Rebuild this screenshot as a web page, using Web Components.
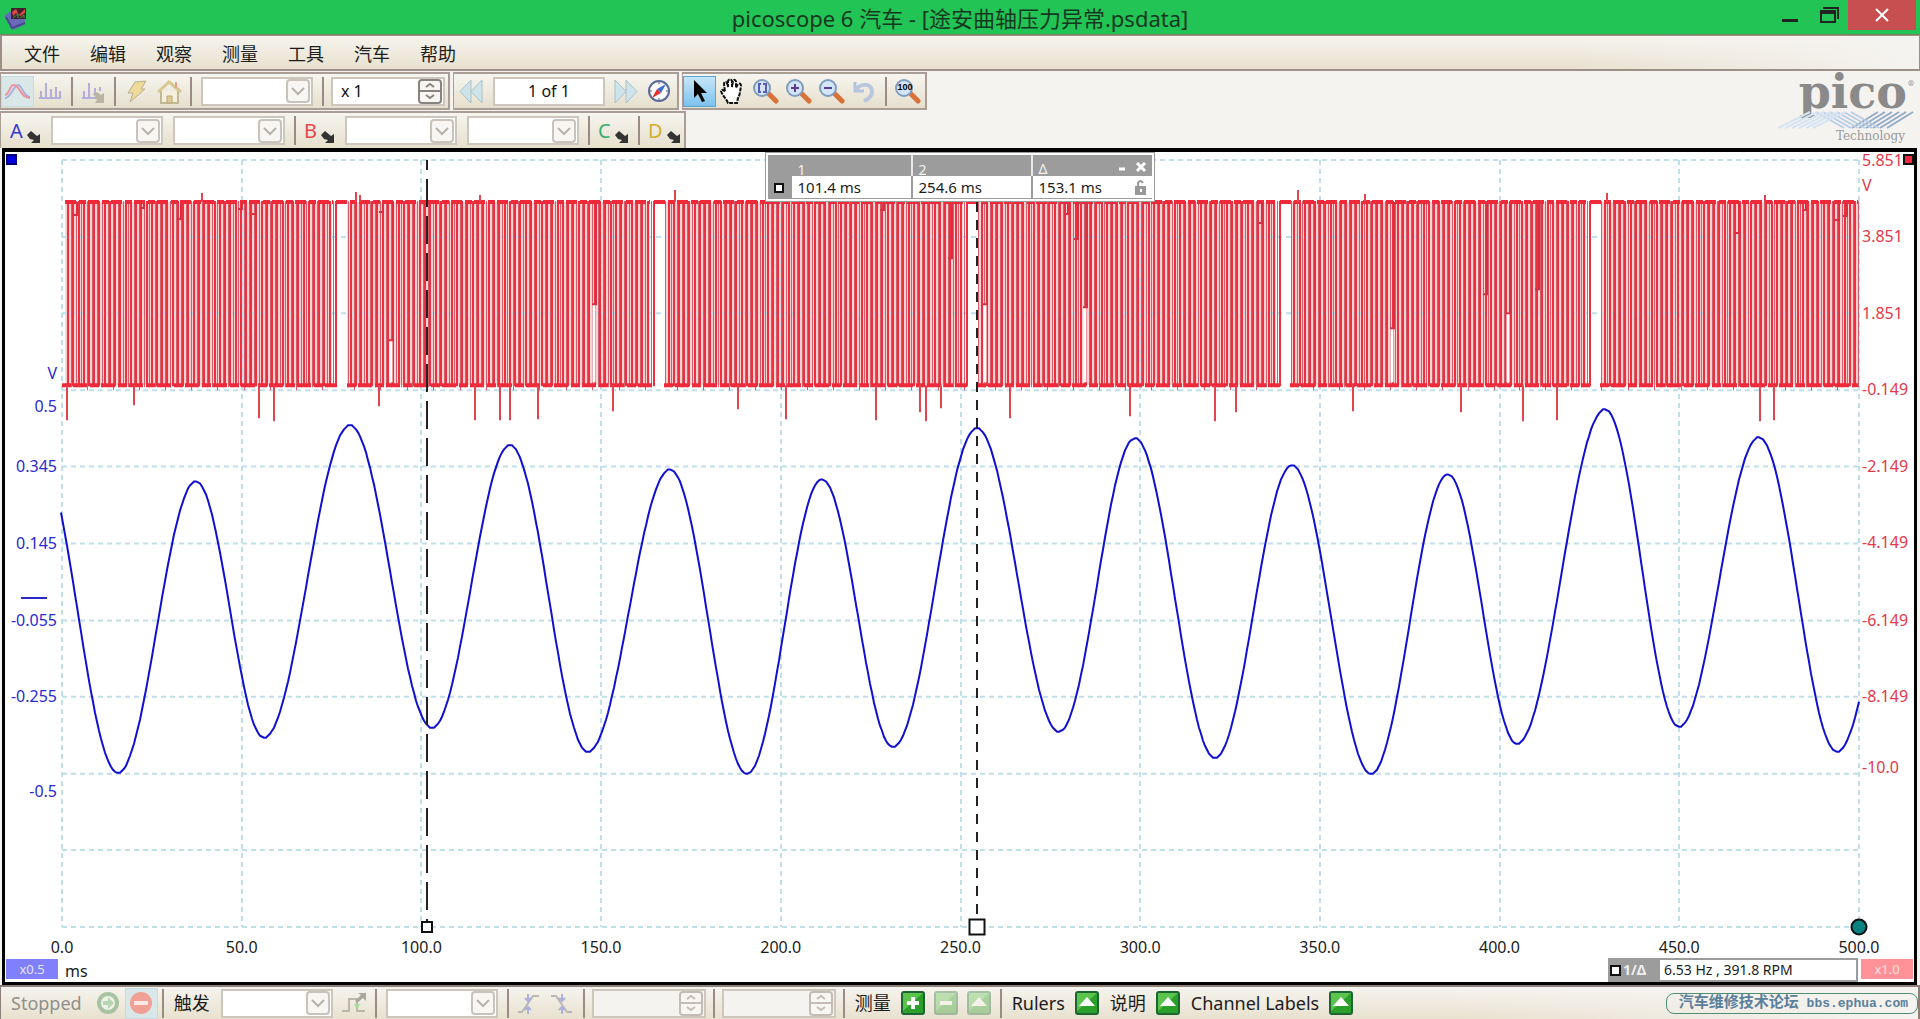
<!DOCTYPE html>
<html lang="zh-CN">
<head>
<meta charset="utf-8">
<title>picoscope 6 汽车</title>
<style>
    html, body {
        height: 100%;
        margin: 0;
    }

    body {
        font-family: "Noto Sans", "Noto Sans CJK SC", sans-serif;
        color: #1c1c1c;
        background: #f5f3f0;
    }
</style>
</head>
<body>
<scope-app></scope-app>

<script>
const ICONS = {
    app: `<path d="M2 13l7-5 15 3-2 11-11 5z" fill="#6a68b8"/><path d="M4 14l6 11 13-5" fill="none" stroke="#4a4a90" stroke-width="2"/><path d="M9 5h15v11H9z" fill="#40202a"/><path d="M10 9l4-3 3 6 6-6v4l-5 3-4-3-3 3z" fill="#e04848"/><path d="M11 15l5-4v4M18 15l4-3v3" stroke="#3a9a50" fill="none"/>`,
    wave: `<path d="M1 20c5 1 9-13 13-13s5 11 12 12" fill="none" stroke="#a8b0dc" stroke-width="2"/><path d="M1 17c5-1 4-10 9-10s7 13 16 13" fill="none" stroke="#f0949c" stroke-width="2"/>`,
    bars: `<path d="M2 20h22M4 20v-7M9 20V5M14 20v-9M19 20V9M23 20v-7" fill="none" stroke="#b5addb" stroke-width="2"/>`,
    barsArrow: `<path d="M2 20h15M4 20v-7M9 20V5M15 10v6M20 9v4" fill="none" stroke="#b5addb" stroke-width="2"/><path d="M13 16l4-2 4 3 3-2v10h-9l2-3z" fill="#b8b5a4"/>`,
    flash: `<path d="M12 4l11-1-5 8h4L7 24l3-9H5z" fill="#eedb9a" stroke="#b8ae90"/>`,
    home: `<path d="M5 13v12h17V13" fill="#f4efdc" stroke="#c2b994" stroke-width="2"/><path d="M2 14L13 4l12 10" fill="none" stroke="#d8c890" stroke-width="3"/><path d="M20 4v6" stroke="#e0a090" stroke-width="2"/><path d="M11 25v-7h5v7z" fill="#e3c88a" stroke="#b8a880"/>`,
    rewind: `<path d="M13 2v23L2 13.500zM24 2v23L13 13.500z" fill="#cfe3ea" stroke="#a9c3cd"/>`,
    forward: `<path d="M2 2v23l11-11.500zM13 2v23l11-11.500z" fill="#cfe3ea" stroke="#a9c3cd"/>`,
    compass: `<circle cx="13" cy="13" r="10" fill="#fcfcfc" stroke="#5a6a98" stroke-width="2"/><path d="M13 4v2M13 20v2M4 13h2M20 13h2" stroke="#557"/><path d="M20 6l-5 9-4-4z" fill="#3b6fd0"/><path d="M6 20l5-9 4 4z" fill="#e03030"/>`,
    pointer: `<path d="M8 2v18l4-4 4 8 3-1-4-8h6z" fill="#000"/>`,
    hand: `<path d="M9 25c-2-5-6-8-7-12 1-2 3-1 4 1L5 6c0-2 2-3 3-1l1 4V3c1-2 3-2 4 0v6l1-6c1-2 3-1 3 1v6l2-4c2-1 3 0 3 2-1 5-1 9-3 12l-1 5z" fill="#fff" stroke="#111" stroke-width="2" stroke-dasharray="4 1"/>`,
    undo: `<path d="M4 4v9h9" fill="none" stroke="#b4c3dd" stroke-width="3"/><path d="M5 12c3-6 15-8 16 1 0 5-3 8-8 10" fill="none" stroke="#b9c6de" stroke-width="4"/>`,
    edge: `<path d="M1 21h7V9h8v12h8" fill="none" stroke="#b8b8a8" stroke-width="2"/><path d="M13 14h6l-3 6z" fill="#a8d8a0"/><path d="M14 11l6-6-3-2h8v8l-3-3-6 5z" fill="#a9a99b"/>`,
    rising: `<path d="M2 22h4L17 6h6" fill="none" stroke="#b9b8b4" stroke-width="2"/><path d="M12 4v6m-3-2l3 3 3-3M12 24v-6m-3 2l3-3 3 3" fill="none" stroke="#aeb0dc" stroke-width="2"/>`,
    falling: `<path d="M2 6h5l11 16h5" fill="none" stroke="#b9b8b4" stroke-width="2"/><path d="M13 4v6m-3-2l3 3 3-3M13 24v-6m-3 2l3-3 3 3" fill="none" stroke="#aeb0dc" stroke-width="2"/>`,
    go: `<circle cx="13" cy="13" r="11" fill="#a9c2a2"/><circle cx="13" cy="13" r="7" fill="#edf3e6"/><path d="M8 11h5V7l6 6-6 6v-4H8z" fill="#b9d4b2"/>`,
    stop: `<circle cx="13" cy="13" r="11" fill="#f0a094"/><path d="M6 11h14v4H6z" fill="#fbe9e4"/>`
};

function lens(mark) {
    return `<path d="M16 15l8 8" stroke="#d9713a" stroke-width="5" stroke-linecap="round"/>
        <circle cx="10" cy="10" r="8" fill="#d3e4f7" stroke="#7f9dbc" stroke-width="2"/>${mark}`;
}
ICONS.zoomBox = lens('<path d="M9 6H7v8h2M11 6h3v8h-3" fill="none" stroke="#5a5ab8" stroke-width="2"/>');
ICONS.zoomIn = lens('<path d="M10 6v8M6 10h8" stroke="#5a3a9a" stroke-width="2"/>');
ICONS.zoomOut = lens('<path d="M6 10h8" stroke="#5a3a9a" stroke-width="2"/>');
ICONS.zoomFull = lens('<text x="11" y="12" font-size="9" font-weight="700" text-anchor="middle" fill="#000">100</text>');

function greenTile(mark) {
    return `<rect x="2" y="2" width="22" height="22" rx="2" fill="#2aa02a" stroke="#1c6434" stroke-width="2"/>
        <path d="M3 3h20L3 21z" fill="#6fd35c" opacity=".7"/>${mark}`;
}
ICONS.plus = greenTile('<path d="M13 7v12M7 13h12" stroke="#fff" stroke-width="4"/>');
ICONS.minus = greenTile('<path d="M7 13h12" stroke="#fff" stroke-width="4"/>');
ICONS.up = greenTile('<path d="M5 16l8-9 8 9z" fill="#fff"/>');

class ScopeElement extends HTMLElement {

    constructor() {
        super();
        this.shadowDOM = this.attachShadow({mode: "open"});
    }

    connectedCallback() {
        this.render();
    }
}

class TitleBar extends ScopeElement {
    render() {
        this.shadowDOM.innerHTML = `
        <style>
            :host {
                display: grid;
                grid-template-columns: 1fr auto 1fr;
                height: 35px;
                box-sizing: border-box;
                background: #22c455;
                border-bottom: 1px solid #6d8a5c;
            }
            h1 {
                margin: 0;
                font-size: 22px;
                font-weight: 400;
                line-height: 36px;
                color: #17381f;
            }
            .app { padding: 3px 2px; }
            .controls {
                display: flex;
                justify-content: flex-end;
                align-items: flex-start;
                padding-right: 4px;
            }
            button {
                width: 39px;
                height: 30px;
                padding: 0;
                border: 0;
                background: none;
            }
            .close { width: 68px; background: #c84f50; }
            svg { display: block; }
            button svg { margin: 0 auto; }
        </style>
        <div class="app"><svg width="27" height="28">${ICONS.app}</svg></div>
        <h1><slot></slot></h1>
        <div class="controls">
            <button aria-label="最小化"><svg width="18" height="30"><path d="M1 20.500h16" stroke="#222" stroke-width="3"/></svg></button>
            <button aria-label="还原"><svg width="20" height="30"><path d="M2 11h14v11H2zM1 13h16" fill="none" stroke="#222" stroke-width="2"/><path d="M4 8h15v11" fill="none" stroke="#222" stroke-width="2"/></svg></button>
            <button class="close" aria-label="关闭"><svg width="14" height="30"><path d="M1 9l12 12M13 9L1 21" stroke="#fff" stroke-width="2"/></svg></button>
        </div>`;
    }
}

class MenuBar extends ScopeElement {
    render() {
        const items = this.getAttribute("items").split(",");
        this.shadowDOM.innerHTML = `
        <style>
            :host {
                display: flex;
                height: 36px;
                box-sizing: border-box;
                padding-left: 7px;
                border: 1px solid #9b8f86;
                border-width: 1px 1px 2px 2px;
                background: linear-gradient(90deg, transparent 82%, #f5f3f0), linear-gradient(#f6f4ee, #e8e1cf);
            }
            button {
                width: 66px;
                padding: 0;
                border: 0;
                background: none;
                color: inherit;
                font: 18px "Noto Sans CJK SC", sans-serif;
            }
        </style>
        ${items.map(item => `<button>${item}</button>`).join("")}`;
    }
}

class ToolGroup extends ScopeElement {
    render() {
        this.shadowDOM.innerHTML = `
        <style>
            :host {
                display: flex;
                align-items: center;
                height: 38px;
                box-sizing: border-box;
                border: 2px solid #aa9d95;
                border-left-width: 1px;
                background: linear-gradient(#f7f5ef, #e6dfcd);
            }
            :host([open]) { height: 37px; border-bottom: 0; }
        </style>
        <slot></slot>`;
    }
}

class ToolButton extends ScopeElement {
    render() {
        const name = this.getAttribute("icon");
        this.shadowDOM.innerHTML = `
        <style>
            :host { display: block; }
            button {
                display: grid;
                place-items: center;
                width: 33px;
                height: 31px;
                padding: 0;
                border: 1px solid transparent;
                background: none;
            }
            :host([state=on]) button {
                border-color: #5aa5d8;
                background: linear-gradient(#c8e6f8, #7cc2ee);
            }
            :host([state=soft]) button {
                border-color: #c5dce0;
                background: #d9e7e8;
            }
            :host([state=faded]) svg { opacity: .35; }
            svg { display: block; }
        </style>
        <button aria-label="${this.getAttribute("label")}"><svg width="27" height="27">${ICONS[name]}</svg></button>`;
    }
}

class ToolDivider extends ScopeElement {
    render() {
        this.shadowDOM.innerHTML = `
        <style>
            :host {
                display: block;
                width: 2px;
                height: 29px;
                margin: 0 4px;
                background: #9a8c84;
            }
        </style>`;
    }
}

class ChannelButton extends ScopeElement {
    render() {
        this.shadowDOM.innerHTML = `
        <style>
            :host { display: block; }
            button {
                display: flex;
                align-items: center;
                gap: 4px;
                width: 40px;
                height: 33px;
                padding: 0 0 0 4px;
                border: 0;
                background: none;
                font: 20px "Noto Sans", sans-serif;
                color: var(--channel);
            }
            svg { margin-top: 12px; }
        </style>
        <button><slot></slot><svg width="13" height="13"><path d="M0 5l4-4 6 5 3-2v9H4l3-3-4-1z" fill="#333"/></svg></button>`;
    }
}

class ComboBox extends ScopeElement {
    render() {
        this.shadowDOM.innerHTML = `
        <style>
            :host {
                display: grid;
                width: 112px;
                height: 29px;
                margin: 0 5px;
            }
            select {
                grid-area: 1 / 1;
                width: 100%;
                appearance: none;
                border: 2px solid #cdc6bc;
                border-radius: 0;
                background: #fff;
                opacity: 1;
            }
            svg {
                grid-area: 1 / 1;
                place-self: center end;
                margin-right: 3px;
                pointer-events: none;
            }
        </style>
        <select disabled aria-label="${this.getAttribute("label")}"></select>
        <svg width="24" height="24"><rect x="1" y="1" width="22" height="22" rx="3" fill="#f8f6f3" stroke="#c9c2bb" stroke-width="2"/><path d="M6 9l6 6 6-6" fill="none" stroke="#b8b2ac" stroke-width="2"/></svg>`;
    }
}

class SpinBox extends ScopeElement {
    render() {
        this.shadowDOM.innerHTML = `
        <style>
            :host {
                --ink: #c4bcb4;
                --paper: #f5f3f0;
                display: grid;
                width: 114px;
                height: 29px;
                margin: 0 3px;
            }
            :host([value]) { --ink: #8a827c; --paper: #fff; }
            input {
                grid-area: 1 / 1;
                width: 100%;
                box-sizing: border-box;
                padding: 0 8px;
                border: 2px solid #cdc6bc;
                background: var(--paper);
                font: 16px "Noto Sans", sans-serif;
                color: #111;
            }
            svg {
                grid-area: 1 / 1;
                place-self: center end;
                margin-right: 3px;
                pointer-events: none;
            }
        </style>
        <input type="text" value="${this.getAttribute("value") || ""}" aria-label="${this.getAttribute("label")}">
        <svg width="24" height="25"><g fill="#f8f6f3" stroke="var(--ink)" stroke-width="2"><rect x="1" y="1" width="22" height="23" rx="3"/><path d="M1 12h22"/><path d="M8 8l4-3 4 3M8 16l4 3 4-3" fill="none"/></g></svg>`;
    }
}

class PicoLogo extends ScopeElement {
    render() {
        let swoosh = "";
        for (let i = 0; i < 6; i++) {
            const x = i * 7;
            swoosh += `<path d="M${2 + x} 17L${34 + x} 1" stroke="#d6e4f2"/>
                <path d="M${40 + x} 1L${68 + x} 17" stroke="#b9cde4"/>
                <path d="M${76 + x} 17L${102 + x} 1" stroke="#93abc6"/>`;
        }
        this.shadowDOM.innerHTML = `
        <style>
            :host {
                display: grid;
                justify-items: end;
                align-content: start;
                padding-right: 5px;
                font-family: "DejaVu Serif", serif;
                color: #8a8a8a;
            }
            .word { display: flex; font-size: 46px; font-weight: 700; line-height: 42px; }
            .word sup { font-size: 8px; line-height: 24px; color: #aaa; }
            svg { margin-top: -2px; }
            .sub { font-size: 12px; line-height: 14px; padding-right: 10px; color: #999; }
        </style>
        <div class="word"><span>pico</span><sup>®</sup></div>
        <svg width="139" height="18" fill="none" stroke-width="2">${swoosh}</svg>
        <div class="sub">Technology</div>`;
    }
}

class RulerLegend extends ScopeElement {
    render() {
        this.shadowDOM.innerHTML = `
        <style>
            :host {
                display: block;
                box-sizing: border-box;
                width: 390px;
                padding: 2px;
                border: 1px solid #9c9c9c;
                background: #fff;
            }
            table {
                width: 100%;
                border-collapse: collapse;
                table-layout: fixed;
                border-bottom: 1px solid #9c9c9c;
                font-size: 15px;
            }
            th, td { padding: 0 6px; text-align: left; white-space: nowrap; }
            thead { background: #9c9c9c; color: #f2f2f2; }
            thead th {
                height: 21px;
                font-size: 14px;
                line-height: 12px;
                font-weight: 400;
                vertical-align: bottom;
                border-right: 2px solid #e8e8e8;
            }
            thead th:first-child, thead th:last-child { border-right: 0; }
            tbody th { background: #9c9c9c; }
            tbody td { height: 22px; line-height: 22px; border-right: 2px solid #9c9c9c; }
            tbody td:last-child { border-right: 0; }
            .end { display: flex; align-items: center; justify-content: space-between; }
            .tools { display: flex; gap: 10px; }
            button { padding: 0; border: 0; background: none; display: block; line-height: 0; }
        </style>
        <table>
            <colgroup><col style="width:24px"><col style="width:120px"><col style="width:120px"><col></colgroup>
            <thead>
                <tr><th></th><th>1</th><th>2</th><th><div class="end">Δ<span class="tools">
                    <button aria-label="最小化"><svg width="8" height="14"><path d="M1 7h6" stroke="#fff" stroke-width="3"/></svg></button>
                    <button aria-label="关闭"><svg width="10" height="14"><path d="M1 1l8 8M9 1l-8 8" stroke="#fff" stroke-width="3"/></svg></button>
                </span></div></th></tr>
            </thead>
            <tbody>
                <tr><th><svg width="10" height="10"><path d="M1 1h8v8H1z" fill="#fff" stroke="#111" stroke-width="2"/></svg></th>
                <td>101.4 ms</td><td>254.6 ms</td>
                <td><div class="end">153.1 ms<svg width="11" height="16"><path d="M3 8V4q2-4 5 0" fill="none" stroke="#999" stroke-width="2"/><path d="M0 7h11v9H0z" fill="#999"/><path d="M5 10h2v3H5z" fill="#fff"/></svg></div></td></tr>
            </tbody>
        </table>`;
    }
}

// Vertical scale: "gap:label" pairs, the gap being the distance from the previous tick
class ScaleAxis extends ScopeElement {
    render() {
        const ticks = this.getAttribute("ticks").split(" ").map(t => t.split(":"));
        this.shadowDOM.innerHTML = `
        <style>
            :host { display: flex; flex-direction: column; font-size: 16px; }
            div {
                display: flex;
                align-items: flex-end;
                justify-content: var(--side);
                min-height: 0;
                height: 0;
            }
            span { line-height: 0; }
            i { width: 26px; height: 2px; margin-right: 10px; background: #2a2ac8; }
        </style>
        ${ticks.map(([gap, label]) => `<div style="flex:${gap} 1 0">${label === "_" ? "<i></i>" : label ? `<span>${label}</span>` : ""}</div>`).join("")}`;
    }
}

const PLOT = {width: 1797, height: 766, left: 62, top: 160};

// Turning points of channel A
const PRESSURE = [
    [37, 447], [118, 772], [196, 481], [264, 737], [350, 425], [432, 727], [510, 445],
    [588, 751], [670, 469], [747, 773], [822, 479], [893, 746], [977, 428], [1059, 731],
    [1135, 438], [1215, 757], [1292, 465], [1371, 773], [1448, 474], [1517, 743],
    [1605, 409], [1679, 726], [1759, 437], [1837, 751], [1915, 480]
];

// First rising edge after each missing tooth of the crank wheel
const GAPS = [22, 336, 654, 967, 1280, 1590, 1903];

const DROPS = [
    [67, 420], [134, 405], [259, 418], [274, 421], [379, 406], [475, 420], [500, 420], [510, 420],
    [538, 419], [613, 411], [738, 409], [786, 419], [876, 420], [920, 412], [926, 421], [941, 408],
    [1010, 418], [1130, 416], [1215, 421], [1236, 412], [1353, 411], [1461, 412], [1523, 421],
    [1557, 420], [1760, 421], [1774, 420]
];
const PEAKS = [[202, 193], [356, 192], [360, 195], [480, 195], [675, 190], [823, 194], [1298, 190], [1365, 194], [1607, 193], [1765, 195]];
const NOTCHES = [
    [75, 215], [142, 208], [179, 219], [240, 209], [254, 214], [381, 212], [391, 340], [594, 304],
    [882, 210], [950, 258], [985, 304], [1066, 214], [1076, 239], [1085, 307], [1260, 223],
    [1392, 328], [1485, 294], [1508, 313], [1537, 289], [1737, 233], [1804, 210], [1837, 220], [1845, 216]
];

function pressurePath() {
    const points = [];
    for (let i = 0; i < PRESSURE.length - 1; i++) {
        const [x0, y0] = PRESSURE[i];
        const [x1, y1] = PRESSURE[i + 1];
        for (let x = x0; x < x1; x += 2) {
            if (x < 61 || x > 1859) continue;
            const t = (x - x0) / (x1 - x0);
            points.push(x + " " + Math.round(y0 + (y1 - y0) * (1 - Math.cos(Math.PI * t)) / 2));
        }
    }
    return "M" + points.join("L");
}

function crankEdges() {
    let rises = "";
    let falls = "";
    for (let g = 0; g < GAPS.length - 1; g++) {
        const start = GAPS[g];
        const step = (GAPS[g + 1] - start) / 60;
        for (let n = 0; n < 58; n++) {
            // the first tooth stays high over the missing ones
            const rise = n === 0 ? start : start + (n + 1.8) * step;
            const fall = n === 0 ? start + 2 * step + 1 : rise + step * .55;
            if (rise < 64 || fall > 1858) continue;
            const wobble = (n * 7 + g * 3) % 5 === 0 ? 4 : 1;
            rises += `M${Math.round(rise)} 386V201`;
            falls += `M${Math.round(fall) + .5} 201V${386 + wobble}`;
        }
    }
    return {rises, falls};
}

class ScopePlot extends ScopeElement {
    render() {
        const {width, height, left, top} = PLOT;
        const {rises, falls} = crankEdges();
        let grid = "";
        for (let i = 0; i <= 10; i++) {
            const x = Math.round(left + width * i / 10);
            const y = Math.round(top + height * i / 10);
            grid += `M${x} ${top}v${height}M${left} ${y}h${width}`;
        }
        this.shadowDOM.innerHTML = `
        <style>
            :host { display: block; position: relative; }
            svg { display: block; width: 100%; height: 100%; overflow: visible; position: absolute; }
            path { vector-effect: non-scaling-stroke; fill: none; }
            .handle {
                position: absolute;
                top: 100%;
                box-sizing: border-box;
                width: var(--size);
                height: var(--size);
                border: 2px solid #111;
                background: #fff;
                transform: translate(-50%, -50%);
            }
            .trigger { border-radius: 50%; background: #0a8080; }
        </style>
        <svg viewBox="${left} ${top} ${width} ${height}" preserveAspectRatio="none">
            <path d="${GAPS.map((g, i) => {
                const from = Math.max(g + 11, 65);
                const to = Math.min((GAPS[i + 1] || 0) - 4, 1858);
                return to > from ? `M${from} 202H${to}V385H${from}z` : "";
            }).join("")}" style="fill:#fad2d2"/>
            <path d="${grid}" stroke="#bfe0ea" stroke-width="2" stroke-dasharray="5 4"/>
            <path d="${falls}" stroke="#cf5f6c" stroke-width="1"/>
            <path d="${rises}" stroke="#ec3040" stroke-width="2"/>
            <path d="M65 202H333M336 202H650M654 202H963M967 202H1275M1280 202H1586M1590 202H1858" stroke="#ee2a3a" stroke-width="4" stroke-dasharray="11 3 7 2"/>
            <path d="M62 385H337M347 385H654M664 385H967M977 385H1280M1290 385H1590M1600 385H1858" stroke="#ee2a3a" stroke-width="4" stroke-dasharray="9 2 14 3"/>
            <path d="${NOTCHES.filter(n => n[1] > 300).map(([x, y]) => `M${x} ${y}V382`).join("")}" stroke="#fff" stroke-width="3"/>
            <path d="${NOTCHES.map(([x, y]) => `M${x - 2} ${y}h4V202`).join("")}" stroke="#d83040" stroke-width="2"/>
            <path d="${DROPS.map(([x, y]) => `M${x} 385V${y}`).join("") + PEAKS.map(([x, y]) => `M${x} 202V${y}`).join("")}" stroke="#e04550" stroke-width="2"/>
            <path d="${pressurePath()}" stroke="#1010d0" stroke-width="2"/>
            <path d="M427 160V926" stroke="#222" stroke-width="2" stroke-dasharray="28 9" stroke-dashoffset="18"/>
            <path d="M977 202V926" stroke="#222" stroke-width="2" stroke-dasharray="10 8"/>
        </svg>
        <div class="handle" style="--size:12px; left:${(427 - left) / width * 100}%"></div>
        <div class="handle" style="--size:17px; left:${(977 - left) / width * 100}%"></div>
        <div class="handle trigger" style="--size:17px; left:100%"></div>`;
    }
}

class TimeAxis extends ScopeElement {
    render() {
        let labels = "";
        for (let t = 0; t <= 500; t += 50) labels += `<span>${t}.0</span>`;
        this.shadowDOM.innerHTML = `
        <style>
            :host {
                display: flex;
                justify-content: space-between;
                font-size: 16px;
                line-height: 40px;
            }
            span { display: flex; justify-content: center; width: 0; height: 31px; }
        </style>
        ${labels}`;
    }
}

class ScopeView extends ScopeElement {
    render() {
        this.shadowDOM.innerHTML = `
        <style>
            :host {
                display: grid;
                position: relative;
                grid-template-columns: 57px 1fr 55px;
                grid-template-rows: 1fr 31px 24px;
                padding-top: 8px;
                margin: 0 3px 0 2px;
                border: 3px solid #000;
                border-top-width: 4px;
                background: #fff;
            }
            scale-axis.a { --side: flex-end; color: #2a2ad0; padding-right: 5px; }
            scale-axis.b { --side: flex-start; color: #e5384a; padding-left: 3px; }
            time-axis { grid-column: 2; }
            .foot {
                grid-column: 1 / -1;
                display: flex;
                align-items: flex-start;
                gap: 3px;
                padding: 0 1px;
            }
            .scale {
                width: 52px;
                margin-top: 1px;
                font-size: 13px;
                line-height: 20px;
                text-align: center;
                color: #e6e6ff;
                background: #8080ff;
            }
            .scale.b { background: #ff9298; color: #ffe0e2; }
            .unit { flex: 1; padding-left: 4px; font-size: 16px; line-height: 26px; }
            .freq {
                display: flex;
                box-sizing: border-box;
                width: 250px;
                height: 24px;
                border: 2px solid #9c9c9c;
                font-size: 14px;
                line-height: 20px;
            }
            .freq b {
                display: flex;
                align-items: center;
                gap: 2px;
                width: 50px;
                background: #9c9c9c;
                color: #eee;
                margin-right: 4px;
            }
            .corner {
                position: absolute;
                top: 2px;
                box-sizing: border-box;
                width: 11px;
                height: 11px;
                border: 2px solid #111;
            }
            .corner.a { left: 1px; background: #0000e0; border-color: #000070; }
            .corner.b { right: 0; background: #f02840; }
            ruler-legend { position: absolute; top: 0; left: 50%; transform: translateX(-50%); }
        </style>
        <scale-axis class="a" ticks="213:V 33:0.5 60:0.345 76:0.145 56:_ 21:-0.055 76:-0.255 95:-0.5 136:"></scale-axis>
        <scope-plot></scope-plot>
        <scale-axis class="b" ticks="0:5.851 25:V 51:3.851 77:1.851 76:-0.149 77:-2.149 76:-4.149 77:-6.149 76:-8.149 71:-10.0 160:"></scale-axis>
        <time-axis></time-axis>
        <div class="foot">
            <span class="scale">x0.5</span>
            <span class="unit">ms</span>
            <div class="freq"><b><svg width="11" height="11"><path d="M1 1h9v9H1z" fill="#fff" stroke="#111" stroke-width="2"/></svg>1/Δ</b>6.53 Hz , 391.8 RPM</div>
            <span class="scale b">x1.0</span>
        </div>
        <span class="corner a"></span>
        <span class="corner b"></span>
        <ruler-legend></ruler-legend>`;
    }
}

class StatusBar extends ScopeElement {
    render() {
        this.shadowDOM.innerHTML = `
        <style>
            :host {
                display: flex;
                align-items: center;
                height: 34px;
                box-sizing: border-box;
                border: 2px solid #8d8078;
                border-width: 2px 2px 0 1px;
                background: linear-gradient(90deg, transparent 75%, #f5f3f0), linear-gradient(#f6f4ee, #e8e1cf);
                font-size: 18px;
                line-height: 32px;
            }
            .text { padding: 0 6px; white-space: nowrap; }
            .text.muted { color: #8f8f8a; padding: 0 10px; }
            .site {
                margin-left: auto;
                padding: 0 9px 0 12px;
                border: 1px solid #4d8f74;
                border-radius: 8px;
                font: 700 13px/19px "Liberation Mono", "Noto Sans CJK SC", monospace;
                color: #5a809c;
                text-decoration: none;
            }
            .site span { font-size: 15px; }
        </style>
        <span class="text muted">Stopped</span>
        <tool-button icon="go" label="开始"></tool-button>
        <tool-button icon="stop" label="停止" state="soft"></tool-button>
        <tool-divider></tool-divider>
        <span class="text">触发</span>
        <combo-box label="触发"></combo-box>
        <tool-button icon="edge" label="高级触发"></tool-button>
        <tool-divider></tool-divider>
        <combo-box label="通道"></combo-box>
        <tool-divider></tool-divider>
        <tool-button icon="rising" label="上升沿"></tool-button>
        <tool-button icon="falling" label="下降沿"></tool-button>
        <tool-divider></tool-divider>
        <spin-box label="阈值"></spin-box>
        <tool-divider></tool-divider>
        <spin-box label="预触发"></spin-box>
        <tool-divider></tool-divider>
        <span class="text">测量</span>
        <tool-button icon="plus" label="添加测量"></tool-button>
        <tool-button icon="minus" label="删除测量" state="faded"></tool-button>
        <tool-button icon="up" label="编辑测量" state="faded"></tool-button>
        <tool-divider></tool-divider>
        <span class="text">Rulers</span>
        <tool-button icon="up" label="Rulers"></tool-button>
        <span class="text">说明</span>
        <tool-button icon="up" label="说明"></tool-button>
        <span class="text">Channel Labels</span>
        <tool-button icon="up" label="Channel Labels"></tool-button>
        <a class="site" href="#"><span>汽车维修技术论坛</span> bbs.ephua.com</a>`;
    }
}

class ScopeApp extends ScopeElement {
    render() {
        this.shadowDOM.innerHTML = `
        <style>
            :host {
                display: flex;
                flex-direction: column;
                min-height: 100vh;
            }
            header {
                display: flex;
                justify-content: space-between;
                height: 77px;
            }
            .bars { display: grid; align-content: start; gap: 1px; padding-top: 1px; }
            .row { display: flex; gap: 3px; }
            .page {
                width: 112px;
                height: 29px;
                box-sizing: border-box;
                margin: 0 5px;
                padding: 0;
                border: 2px solid #cdc6bc;
                font: 16px "Noto Sans", sans-serif;
                text-align: center;
                color: #111;
            }
            .nav { padding: 0 1px; }
            .view { padding-right: 1px; }
            .channels { padding-left: 5px; }
            scope-view { flex: 1; }
        </style>
        <title-bar>picoscope 6 汽车 - [途安曲轴压力异常.psdata]</title-bar>
        <menu-bar items="文件,编辑,观察,测量,工具,汽车,帮助"></menu-bar>
        <header>
            <div class="bars">
                <div class="row">
                    <tool-group>
                        <tool-button icon="wave" label="示波器" state="soft"></tool-button>
                        <tool-button icon="bars" label="频谱"></tool-button>
                        <tool-divider></tool-divider>
                        <tool-button icon="barsArrow" label="频谱选项"></tool-button>
                        <tool-divider></tool-divider>
                        <tool-button icon="flash" label="自动设置"></tool-button>
                        <tool-button icon="home" label="主页"></tool-button>
                        <tool-divider></tool-divider>
                        <combo-box label="时基"></combo-box>
                        <tool-divider></tool-divider>
                        <spin-box label="缩放" value="x 1"></spin-box>
                    </tool-group>
                    <tool-group class="nav">
                        <tool-button icon="rewind" label="上一个"></tool-button>
                        <input class="page" type="text" value="1 of 1" aria-label="缓冲区">
                        <tool-button icon="forward" label="下一个"></tool-button>
                        <tool-button icon="compass" label="导航"></tool-button>
                    </tool-group>
                    <tool-group class="view">
                        <tool-button icon="pointer" label="选择" state="on"></tool-button>
                        <tool-button icon="hand" label="平移"></tool-button>
                        <tool-button icon="zoomBox" label="框选缩放"></tool-button>
                        <tool-button icon="zoomIn" label="放大"></tool-button>
                        <tool-button icon="zoomOut" label="缩小"></tool-button>
                        <tool-button icon="undo" label="撤销缩放"></tool-button>
                        <tool-divider></tool-divider>
                        <tool-button icon="zoomFull" label="全图"></tool-button>
                    </tool-group>
                </div>
                <div class="row">
                    <tool-group open class="channels">
                        <channel-button style="--channel:#3535d0">A</channel-button>
                        <combo-box label="A 量程"></combo-box>
                        <combo-box label="A 耦合"></combo-box>
                        <tool-divider></tool-divider>
                        <channel-button style="--channel:#e8454c">B</channel-button>
                        <combo-box label="B 量程"></combo-box>
                        <combo-box label="B 耦合"></combo-box>
                        <tool-divider></tool-divider>
                        <channel-button style="--channel:#35b070">C</channel-button>
                        <tool-divider></tool-divider>
                        <channel-button style="--channel:#d0b030">D</channel-button>
                    </tool-group>
                </div>
            </div>
            <pico-logo></pico-logo>
        </header>
        <scope-view></scope-view>
        <status-bar></status-bar>`;
    }
}

customElements.define("title-bar", TitleBar);
customElements.define("menu-bar", MenuBar);
customElements.define("tool-group", ToolGroup);
customElements.define("tool-button", ToolButton);
customElements.define("tool-divider", ToolDivider);
customElements.define("channel-button", ChannelButton);
customElements.define("combo-box", ComboBox);
customElements.define("spin-box", SpinBox);
customElements.define("pico-logo", PicoLogo);
customElements.define("ruler-legend", RulerLegend);
customElements.define("scale-axis", ScaleAxis);
customElements.define("scope-plot", ScopePlot);
customElements.define("time-axis", TimeAxis);
customElements.define("scope-view", ScopeView);
customElements.define("status-bar", StatusBar);
customElements.define("scope-app", ScopeApp);
</script>
</body>
</html>
